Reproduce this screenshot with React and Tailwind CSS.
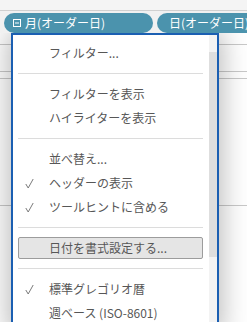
import React from "react";

const jp = { fontFamily: '"Noto Sans CJK JP", "Noto Sans", sans-serif' };

function Check() {
  return (
    <svg width="9" height="11" viewBox="0 0 9 11" className="block">
      <polyline points="0.8,6 3.2,10 8.2,1" fill="none" stroke="#7a7a7a" strokeWidth="1" />
    </svg>
  );
}

function Item({ label, checked }) {
  return (
    <div className="h-[24px] flex items-center pl-[12px]">
      <div className="w-[24px] flex items-center">{checked ? <Check /> : null}</div>
      <span className="text-[12px] leading-none text-[#575757] whitespace-nowrap">{label}</span>
    </div>
  );
}

function Sep() {
  return (
    <div className="h-[17px] pt-[8px] pl-[5px] pr-[6px]">
      <div className="h-px bg-[#dcdcdc]" />
    </div>
  );
}

export default function App() {
  return (
    <div className="w-[247px] h-[322px] overflow-hidden bg-white" style={jp}>
      <div className="h-[10px] bg-[#f4f4f4]" />
      <div className="h-px bg-[#d0d0d0]" />
      <div className="h-[22px] bg-[#f1f1f1] pt-[2px] flex gap-[4px]">
        <div className="w-[7px] h-[20px] rounded-r-full bg-[#4b93ad]" />
        <div className="w-[149px] h-[20px] rounded-full bg-[#4b93ad] flex items-center pl-[9px] shrink-0">
          <svg width="8" height="8" viewBox="0 0 8 8" className="block">
            <rect x="0.5" y="0.5" width="7" height="7" fill="none" stroke="#ffffff" strokeWidth="1" />
            <line x1="2" y1="4" x2="6" y2="4" stroke="#ffffff" strokeWidth="1" />
          </svg>
          <span className="ml-[4px] text-[12px] leading-none text-white whitespace-nowrap">月(オーダー日)</span>
        </div>
        <div className="w-[120px] h-[20px] rounded-l-full bg-[#4b93ad] flex items-center pl-[12px] shrink-0 overflow-hidden">
          <span className="text-[12px] leading-none text-white whitespace-nowrap">日(オーダー日)</span>
        </div>
      </div>
      <div className="relative h-[289px] overflow-hidden bg-white">
        <div className="h-[11px]" />
        <div className="h-px bg-[#c9c9c9]" />
        <div className="h-[26px]" />
        <div className="h-px bg-[#c9c9c9]" />
        <div className="h-[6px]" />
        <div className="h-px bg-[#c9c9c9]" />
        <div className="h-[126px]" />
        <div className="h-px bg-[#c9c9c9]" />

        <div className="absolute left-[11px] top-0 w-[208px] h-[300px] bg-white border-2 border-[#1b5fb2] shadow-[0_0_26px_3px_rgba(0,0,0,0.28)] flex">
          <div className="flex-1 pt-[6px]">
            <Item label="フィルター..." />
            <Sep />
            <Item label="フィルターを表示" />
            <Item label="ハイライターを表示" />
            <Sep />
            <Item label="並べ替え..." />
            <Item label="ヘッダーの表示" checked />
            <Item label="ツールヒントに含める" checked />
            <Sep />
            <div className="h-[24px] py-[1px] pl-[5px] pr-[6px]">
              <div className="h-full border border-[#9c9c9c] rounded-[2px] bg-[#e5e5e5] flex items-center pl-[30px]">
                <span className="text-[12px] leading-none text-[#575757] whitespace-nowrap">日付を書式設定する...</span>
              </div>
            </div>
            <Sep />
            <Item label="標準グレゴリオ暦" checked />
            <Item label="週ベース (ISO-8601)" />
          </div>
          <div className="w-[8px] bg-[#f3f3f3]">
            <div className="h-[17px]" />
            <div className="h-[205px] bg-[#dedede]" />
          </div>
        </div>
      </div>
    </div>
  );
}
